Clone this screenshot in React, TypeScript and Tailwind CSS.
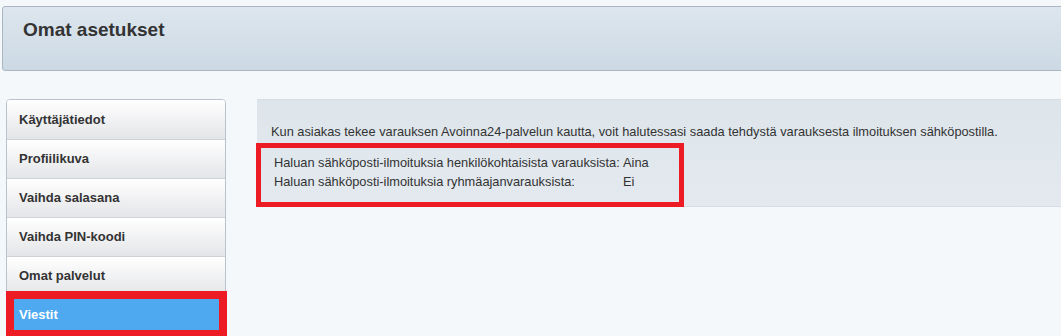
import React from "react";

const items = [
  "Käyttäjätiedot",
  "Profiilikuva",
  "Vaihda salasana",
  "Vaihda PIN-koodi",
  "Omat palvelut",
];

export default function App() {
  return (
    <div
      className="w-[1061px] h-[336px] overflow-hidden bg-[#f4f8fb] text-[#333]"
      style={{ fontFamily: '"Liberation Sans", Arial, sans-serif' }}
    >
      <div className="ml-[2px] mt-[6px] h-[65px] w-[1080px] rounded-[3px] border border-[#aab7c3] bg-gradient-to-b from-[#dde6ee] to-[#ccd9e4] pl-[20px] pt-[12px]">
        <h1 className="text-[19px] leading-[22px] font-bold text-[#333]">Omat asetukset</h1>
      </div>

      <div className="mt-[28px] flex items-start">
        <div className="relative ml-[6px] w-[220px] shrink-0">
          <div className="rounded-t-[4px] border border-[#b9c3cc] bg-white">
            {items.map((t, i) => (
              <div
                key={t}
                className={`flex h-[39px] items-center bg-gradient-to-b from-[#ffffff] to-[#e4e5e8] pl-[12px] text-[13px] font-bold text-[#333] ${
                  i === 0 ? "h-[38px] rounded-t-[3px]" : "border-t border-[#cfd3d8]"
                }`}
              >
                {t}
              </div>
            ))}
            <div className="flex h-[39px] items-center border-t border-[#3f95db] bg-[#4ea9f1] pl-[12px] text-[13px] font-bold text-white">
              Viestit
            </div>
          </div>
          <div className="absolute left-0 top-[192px] h-[47px] w-[221px] border-[8px] border-[#ed1c24]" />
        </div>

        <div className="relative ml-[31px] w-[820px] shrink-0">
          <div className="h-[108px] border-t border-b border-[#d6dde3] bg-gradient-to-b from-[#dde5eb] to-[#e3e9ef] pl-[14px] pt-[23px] text-[12.8px]">
            <p className="leading-[18px] whitespace-nowrap text-[#333]">
              Kun asiakas tekee varauksen Avoinna24-palvelun kautta, voit halutessasi saada tehdystä varauksesta ilmoituksen sähköpostilla.
            </p>
            <div className="mt-[12px] grid grid-cols-[349px_auto] pl-[3px] leading-[19px] text-[#333]">
              <span className="whitespace-nowrap">Haluan sähköposti-ilmoituksia henkilökohtaisista varauksista:</span>
              <span>Aina</span>
              <span className="whitespace-nowrap">Haluan sähköposti-ilmoituksia ryhmäajanvarauksista:</span>
              <span>Ei</span>
            </div>
          </div>
          <div className="absolute left-[-1px] top-[44px] h-[64px] w-[428px] border-[5px] border-[#ed1c24]" />
        </div>
      </div>
    </div>
  );
}
